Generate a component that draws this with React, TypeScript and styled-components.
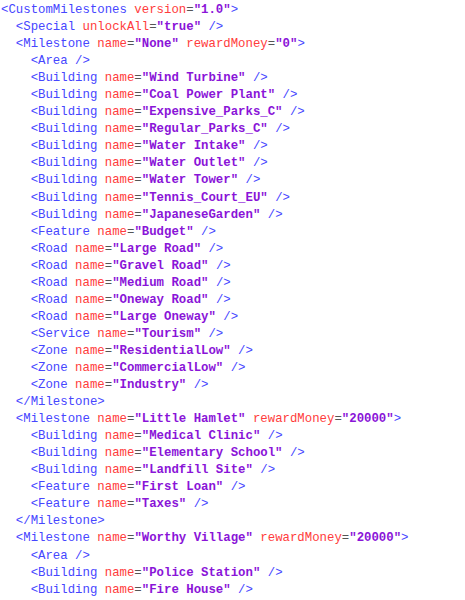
import React from "react";
import styled, { createGlobalStyle } from "styled-components";

const Global = createGlobalStyle`
  html, body { margin: 0; padding: 0; background: #ffffff; }
`;

const Code = styled.div`
  font-family: "Liberation Mono", "Courier New", monospace;
  font-size: 12.35px;
  line-height: 17.06px;
  padding: 2px 0 0 1px;
  white-space: pre;
  color: #000;
`;

const Line = styled.div<{ $indent: number }>`
  padding-left: ${(p) => p.$indent * 2}ch;
  height: 17.06px;
`;

const Tag = styled.span`
  color: #4646ff;
`;
const Attr = styled.span`
  color: #ff3c3c;
`;
const Eq = styled.span`
  color: #555555;
`;
const Val = styled.span`
  color: #8a14d8;
  font-weight: bold;
`;

type A = [string, string];
type L = { i: number; tag: string; attrs?: A[]; end?: "open" | "self" | "close" };

const lines: L[] = [
  { i: 0, tag: "CustomMilestones", attrs: [["version", "1.0"]], end: "open" },
  { i: 1, tag: "Special", attrs: [["unlockAll", "true"]], end: "self" },
  { i: 1, tag: "Milestone", attrs: [["name", "None"], ["rewardMoney", "0"]], end: "open" },
  { i: 2, tag: "Area", end: "self" },
  { i: 2, tag: "Building", attrs: [["name", "Wind Turbine"]], end: "self" },
  { i: 2, tag: "Building", attrs: [["name", "Coal Power Plant"]], end: "self" },
  { i: 2, tag: "Building", attrs: [["name", "Expensive_Parks_C"]], end: "self" },
  { i: 2, tag: "Building", attrs: [["name", "Regular_Parks_C"]], end: "self" },
  { i: 2, tag: "Building", attrs: [["name", "Water Intake"]], end: "self" },
  { i: 2, tag: "Building", attrs: [["name", "Water Outlet"]], end: "self" },
  { i: 2, tag: "Building", attrs: [["name", "Water Tower"]], end: "self" },
  { i: 2, tag: "Building", attrs: [["name", "Tennis_Court_EU"]], end: "self" },
  { i: 2, tag: "Building", attrs: [["name", "JapaneseGarden"]], end: "self" },
  { i: 2, tag: "Feature", attrs: [["name", "Budget"]], end: "self" },
  { i: 2, tag: "Road", attrs: [["name", "Large Road"]], end: "self" },
  { i: 2, tag: "Road", attrs: [["name", "Gravel Road"]], end: "self" },
  { i: 2, tag: "Road", attrs: [["name", "Medium Road"]], end: "self" },
  { i: 2, tag: "Road", attrs: [["name", "Oneway Road"]], end: "self" },
  { i: 2, tag: "Road", attrs: [["name", "Large Oneway"]], end: "self" },
  { i: 2, tag: "Service", attrs: [["name", "Tourism"]], end: "self" },
  { i: 2, tag: "Zone", attrs: [["name", "ResidentialLow"]], end: "self" },
  { i: 2, tag: "Zone", attrs: [["name", "CommercialLow"]], end: "self" },
  { i: 2, tag: "Zone", attrs: [["name", "Industry"]], end: "self" },
  { i: 1, tag: "Milestone", end: "close" },
  { i: 1, tag: "Milestone", attrs: [["name", "Little Hamlet"], ["rewardMoney", "20000"]], end: "open" },
  { i: 2, tag: "Building", attrs: [["name", "Medical Clinic"]], end: "self" },
  { i: 2, tag: "Building", attrs: [["name", "Elementary School"]], end: "self" },
  { i: 2, tag: "Building", attrs: [["name", "Landfill Site"]], end: "self" },
  { i: 2, tag: "Feature", attrs: [["name", "First Loan"]], end: "self" },
  { i: 2, tag: "Feature", attrs: [["name", "Taxes"]], end: "self" },
  { i: 1, tag: "Milestone", end: "close" },
  { i: 1, tag: "Milestone", attrs: [["name", "Worthy Village"], ["rewardMoney", "20000"]], end: "open" },
  { i: 2, tag: "Area", end: "self" },
  { i: 2, tag: "Building", attrs: [["name", "Police Station"]], end: "self" },
  { i: 2, tag: "Building", attrs: [["name", "Fire House"]], end: "self" },
];

export default function App() {
  return (
    <>
      <Global />
      <Code>
        {lines.map((l, idx) => (
          <Line key={idx} $indent={l.i}>
            {l.end === "close" ? (
              <Tag>{`</${l.tag}>`}</Tag>
            ) : (
              <>
                <Tag>{`<${l.tag}`}</Tag>
                {(l.attrs || []).map(([k, v], j) => (
                  <React.Fragment key={j}>
                    {" "}
                    <Attr>{k}</Attr>
                    <Eq>=</Eq>
                    <Val>{`"${v}"`}</Val>
                  </React.Fragment>
                ))}
                <Tag>{l.end === "self" ? " />" : ">"}</Tag>
              </>
            )}
          </Line>
        ))}
      </Code>
    </>
  );
}
